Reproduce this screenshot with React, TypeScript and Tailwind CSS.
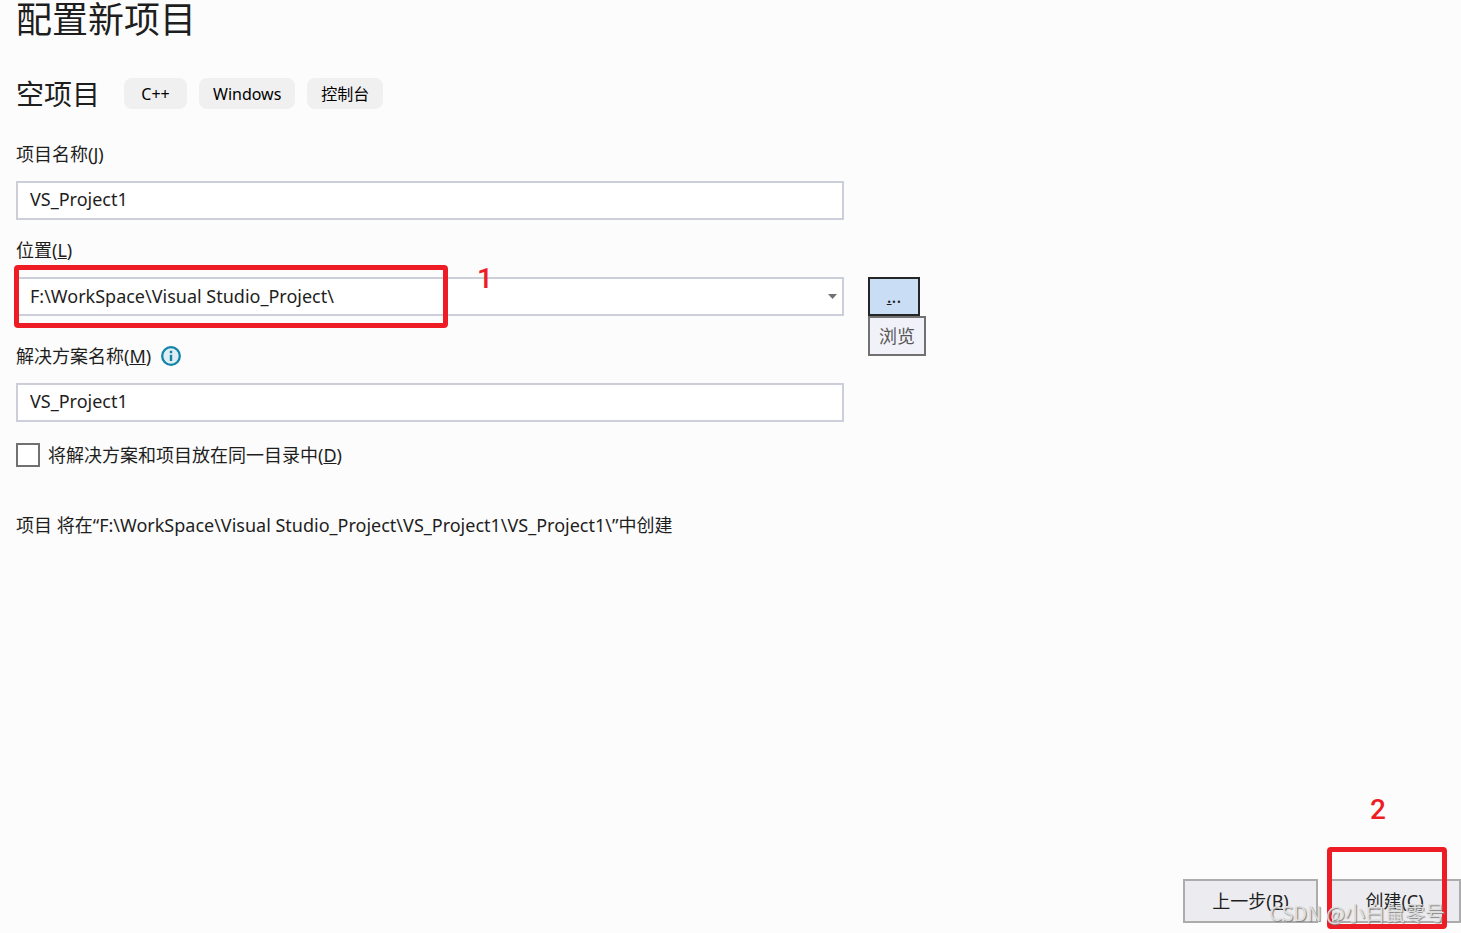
import { useId, useState } from "react";
import type { ReactNode } from "react";

const TAGS = ["C++", "Windows", "控制台"];
const LOCATION = "F:\\WorkSpace\\Visual Studio_Project\\";

interface FieldProps {
    label: ReactNode;
    value: string;
    onChange: (value: string) => void;
    hint?: ReactNode;
}

// ラベル付きテキスト入力
function TextField({ label, value, onChange, hint }: FieldProps) {
    const id = useId();

    return (
        <div className="flex flex-col gap-[15px]">
            <div className="flex h-6 items-center gap-2.5">
                <label htmlFor={id} className="leading-6">
                    {label}
                </label>
                {hint}
            </div>
            <input
                id={id}
                type="text"
                value={value}
                onChange={(e) => onChange(e.target.value)}
                className="h-[39px] w-full max-w-[828px] border-2 border-[#ccced9] bg-white px-3 pb-1 outline-none"
            />
        </div>
    );
}

function InfoIcon() {
    return (
        <svg width="20" height="20" viewBox="0 0 20 20" aria-hidden="true">
            <circle cx="10" cy="10" r="8.800" fill="#e0edf2" stroke="#0f84a8" strokeWidth="2.300" />
            <rect x="8.800" y="4.800" width="2.400" height="2.400" fill="#0f84a8" />
            <rect x="8.800" y="8.800" width="2.400" height="6.200" fill="#0f84a8" />
        </svg>
    );
}

export default function App() {
    const [projectName, setProjectName] = useState("VS_Project1");
    const [solutionName, setSolutionName] = useState("VS_Project1");
    const [sameDirectory, setSameDirectory] = useState(false);

    return (
        <div className="relative flex min-h-screen flex-col overflow-hidden bg-[#fcfcfc] font-['Noto_Sans','Noto_Sans_CJK_SC',sans-serif] text-[18px] text-[#1e1e1e]">
            <main className="flex flex-1 flex-col px-4">
                <h1 className="text-[36px] leading-10">配置新项目</h1>

                <div className="mt-[38px] flex h-[31px] items-center gap-3">
                    <h2 className="mr-3 text-[28px] leading-8">空项目</h2>
                    {TAGS.map((tag) => (
                        <span
                            key={tag}
                            className="flex h-[31px] min-w-[63px] items-center justify-center rounded-lg bg-[#f0f0f0] px-3.5 text-base text-black"
                        >
                            {tag}
                        </span>
                    ))}
                </div>

                <div className="mt-[33px]">
                    <TextField
                        label={<>项目名称(<u>J</u>)</>}
                        value={projectName}
                        onChange={setProjectName}
                    />
                </div>

                <div className="mt-[18px] flex flex-col gap-[15px]">
                    <label htmlFor="location" className="leading-6">
                        位置(<u>L</u>)
                    </label>
                    <div className="flex gap-6">
                        <div className="relative w-full max-w-[828px]">
                            <select
                                id="location"
                                className="h-[39px] w-full appearance-none border-2 border-[#ccced9] bg-white px-3 outline-none"
                            >
                                <option>{LOCATION}</option>
                            </select>
                            <svg
                                className="pointer-events-none absolute top-[17px] right-[7px]"
                                width="9"
                                height="5"
                                viewBox="0 0 9 5"
                                aria-hidden="true"
                            >
                                <path d="M0 0h9L4.500 5z" fill="#717171" />
                            </svg>
                            {/* 手順1の赤枠 */}
                            <div className="pointer-events-none absolute -top-3 -left-0.5 h-[63px] w-[434px] rounded-sm border-5 border-[#ee1c25]" />
                            <span className="absolute -top-3 left-[461px] font-['Roboto',sans-serif] text-[28px] leading-7 font-medium text-[#ee1c25]">
                                1
                            </span>
                        </div>
                        <div className="relative">
                            <button
                                type="button"
                                aria-label="浏览"
                                className="h-[39px] w-[52px] border-2 border-[#252526] bg-[#c9def5]"
                            >
                                <u>.</u>..
                            </button>
                            <div
                                role="tooltip"
                                className="absolute top-[39px] left-0 flex h-10 w-[58px] items-center justify-center border-2 border-[#717171] bg-[#f1f2f9] text-[#575757]"
                            >
                                浏览
                            </div>
                        </div>
                    </div>
                </div>

                <div className="mt-7">
                    <TextField
                        label={<>解决方案名称(<u>M</u>)</>}
                        value={solutionName}
                        onChange={setSolutionName}
                        hint={<InfoIcon />}
                    />
                </div>

                <label className="mt-[21px] flex items-center gap-2 self-start leading-6">
                    <input
                        type="checkbox"
                        checked={sameDirectory}
                        onChange={(e) => setSameDirectory(e.target.checked)}
                        className="size-6 appearance-none border-2 border-[#717171] bg-white checked:bg-[#717171]"
                    />
                    <span>
                        将解决方案和项目放在同一目录中(<u>D</u>)
                    </span>
                </label>

                <p className="mt-[46px] leading-6">
                    项目 将在“{LOCATION}VS_Project1\VS_Project1\”中创建
                </p>
            </main>

            <footer className="flex justify-end gap-2.5 pb-2.5">
                <button type="button" className="h-11 w-[135px] border-2 border-[#acacac] bg-[#ececf0]">
                    上一步(<u>B</u>)
                </button>
                <div className="relative">
                    <button type="button" className="h-11 w-[133px] border-2 border-[#acacac] bg-[#ececf0]">
                        创建(<u>C</u>)
                    </button>
                    {/* 手順2の赤枠 */}
                    <div className="pointer-events-none absolute -top-8 -left-px h-[82px] w-[120px] rounded-sm border-5 border-[#ee1c25]" />
                    <span className="absolute -top-[83px] left-[42px] font-['Roboto',sans-serif] text-[28px] leading-7 font-medium text-[#ee1c25]">
                        2
                    </span>
                </div>
            </footer>

            <span className="pointer-events-none absolute right-4 bottom-2 font-['Noto_Sans_CJK_SC',sans-serif] text-[20px] leading-6 text-[#dedede] [text-shadow:1px_1px_1px_#808080]">
                CSDN @小白鼠零号
            </span>
        </div>
    );
}
